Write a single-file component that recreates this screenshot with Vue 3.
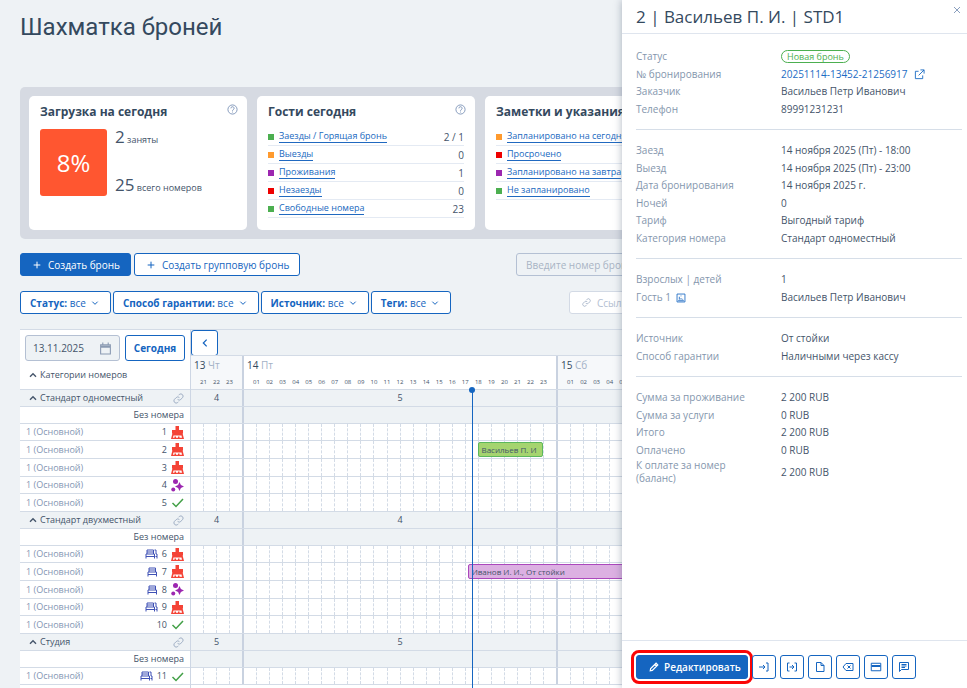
<script setup>
import { ref } from 'vue'

const date = ref('13.11.2025')
const search = ref('')

const guests = [
  { color: 'green', label: 'Заезды / Горящая бронь', value: '2 / 1' },
  { color: 'orange', label: 'Выезды', value: '0' },
  { color: 'purple', label: 'Проживания', value: '1' },
  { color: 'red', label: 'Незаезды', value: '0' },
  { color: 'green', label: 'Свободные номера', value: '23' },
]
const notes = [
  { color: 'orange', label: 'Запланировано на сегодня' },
  { color: 'red', label: 'Просрочено' },
  { color: 'purple', label: 'Запланировано на завтра' },
  { color: 'green', label: 'Не запланировано' },
]
const filters = ['Статус:', 'Способ гарантии:', 'Источник:', 'Теги:']

const HOUR = 314 / 24
const FIRST_DAY = 51
const days = [
  { num: '13', name: 'Чт', from: 20, width: FIRST_DAY, muted: true },
  { num: '14', name: 'Пт', from: 0, width: 314, muted: false },
  { num: '15', name: 'Сб', from: 0, width: 314, muted: true },
]
const hoursOf = (d) => Array.from({ length: 23 - d.from }, (_, i) => String(d.from + i + 1).padStart(2, '0'))
/* offset of an hour of 14 November from the left edge of the timeline */
const at = (h) => FIRST_DAY + h * HOUR

const categories = [
  {
    name: 'Стандарт одноместный', free: ['4', '5', ''],
    rooms: [
      { n: 1, state: 'dirty' },
      { n: 2, state: 'dirty', stay: { from: 18, to: 23, text: 'Васильев П. И', kind: 'new' } },
      { n: 3, state: 'dirty' }, { n: 4, state: 'clean' }, { n: 5, state: 'ok' },
    ],
  },
  {
    name: 'Стандарт двухместный', free: ['4', '4', ''],
    rooms: [
      { n: 6, state: 'dirty', bed: 'extra' },
      { n: 7, state: 'dirty', bed: 'one', stay: { from: 17.25, to: 44, text: 'Иванов И. И., От стойки', kind: 'live' } },
      { n: 8, state: 'clean', bed: 'one' }, { n: 9, state: 'dirty', bed: 'extra' }, { n: 10, state: 'ok' },
    ],
  },
  { name: 'Студия', free: ['5', '5', ''], rooms: [{ n: 11, state: 'ok', bed: 'extra' }] },
]

const details = [
  [['Заезд', '14 ноября 2025 (Пт) - 18:00'], ['Выезд', '14 ноября 2025 (Пт) - 23:00'], ['Дата бронирования', '14 ноября 2025 г.'], ['Ночей', '0'], ['Тариф', 'Выгодный тариф'], ['Категория номера', 'Стандарт одноместный']],
  [['Взрослых | детей', '1'], ['Гость 1', 'Васильев Петр Иванович', 'profile']],
  [['Источник', 'От стойки'], ['Способ гарантии', 'Наличными через кассу']],
  [['Сумма за проживание', '2 200 RUB'], ['Сумма за услуги', '0 RUB'], ['Итого', '2 200 RUB'], ['Оплачено', '0 RUB'], ['К оплате за номер (баланс)', '2 200 RUB', 'tall']],
]

const tools = [
  { label: 'Заселить', d: 'M2 12h12M10 8l4 4-4 4M16 4h4v16h-4' },
  { label: 'Выселить', d: 'M7 4H3v16h4M17 4h4v16h-4M7 12h9M12 8l4 4-4 4' },
  { label: 'Документы', d: 'M5 3h9l6 6v12H5zM14 3v6h6' },
  { label: 'Отменить', d: 'M8 5h14v14H8l-6-7zM11 9l6 6M17 9l-6 6' },
  { label: 'Оплата', d: 'M2.500 4.500h19v15h-19zM3 9h18M3 11h18' },
  { label: 'Заметки', d: 'M3 3h18v14H7l-4 4zM7 7h10M7 10h10M7 13h7' },
]
</script>

<template>
  <div class="page">
    <main class="main">
      <h1>Шахматка броней</h1>

      <section class="stats">
        <article class="card">
          <header>
            <h2>Загрузка на сегодня</h2>
            <svg class="help" viewBox="0 0 24 24"><circle cx="12" cy="12" r="10" /><path d="M8.500 9.500a3.500 3.500 0 1 1 5.200 3c-1.200.7-1.700 1.300-1.700 2.500M12 16.500v2" /></svg>
          </header>
          <div class="load">
            <div class="percent">8%</div>
            <div class="load-text">
              <p><b>2</b> заняты</p>
              <p><b>25</b> всего номеров</p>
            </div>
          </div>
        </article>
        <article class="card">
          <header>
            <h2>Гости сегодня</h2>
            <svg class="help" viewBox="0 0 24 24"><circle cx="12" cy="12" r="10" /><path d="M8.500 9.500a3.500 3.500 0 1 1 5.200 3c-1.200.7-1.700 1.300-1.700 2.500M12 16.500v2" /></svg>
          </header>
          <ul>
            <li v-for="g in guests" :key="g.label">
              <i :class="g.color"></i><a href="#">{{ g.label }}</a><span>{{ g.value }}</span>
            </li>
          </ul>
        </article>
        <article class="card">
          <header><h2>Заметки и указания</h2></header>
          <ul>
            <li v-for="n in notes" :key="n.label"><i :class="n.color"></i><a href="#">{{ n.label }}</a></li>
          </ul>
        </article>
      </section>

      <div class="actions">
        <button class="btn primary"><svg viewBox="0 0 24 24"><path d="M12 2v20M2 12h20" /></svg>Создать бронь</button>
        <button class="btn"><svg viewBox="0 0 24 24"><path d="M12 2v20M2 12h20" /></svg>Создать групповую бронь</button>
        <input v-model="search" class="search" type="text" aria-label="Номер брони" placeholder="Введите номер брони">
      </div>

      <div class="filters">
        <button v-for="f in filters" :key="f" class="btn filter" aria-haspopup="listbox">
          <b>{{ f }}</b> все<svg viewBox="0 0 24 24"><path d="M4 8l8 8 8-8" /></svg>
        </button>
        <div class="links">
          <button class="link-btn">
            <svg class="clip" viewBox="0 0 24 24"><path d="M10 14a5 5 0 0 0 7 0l4-4a5 5 0 0 0-7-7l-2 2M14 10a5 5 0 0 0-7 0l-4 4a5 5 0 0 0 7 7l2-2" /></svg>Ссылки
          </button>
        </div>
      </div>

      <section class="board">
        <div class="side">
          <div class="side-head">
            <div class="dates">
              <label class="date">
                <input v-model="date" type="text" aria-label="Дата">
                <svg viewBox="0 0 24 24"><path d="M3 5h18v17H3zM3 9.500h18M7 1v4M17 1v4M3 7.500h18" /></svg>
              </label>
              <button class="today">Сегодня</button>
            </div>
            <div class="all"><svg class="caret" viewBox="0 0 24 24"><path d="M3 17l9-9 9 9" /></svg>Категории номеров</div>
          </div>
          <div v-for="c in categories" :key="c.name" class="group">
            <div class="row cat">
              <svg class="caret" viewBox="0 0 24 24"><path d="M3 17l9-9 9 9" /></svg>{{ c.name }}
              <svg class="clip" viewBox="0 0 24 24"><path d="M10 14a5 5 0 0 0 7 0l4-4a5 5 0 0 0-7-7l-2 2M14 10a5 5 0 0 0-7 0l-4 4a5 5 0 0 0 7 7l2-2" /></svg>
            </div>
            <div class="row none">Без номера</div>
            <div v-for="r in c.rooms" :key="r.n" class="row room">
              <span class="place">1 (Основной)</span>
              <svg v-if="r.bed" class="bed" :class="r.bed" :viewBox="r.bed === 'extra' ? '0 0 26 20' : '0 0 22 20'">
                <path d="M4 10V2h13v8M2 19v-9h17v9M2 15h17M4 6h13" />
                <path v-if="r.bed === 'extra'" d="M19 2h3v8h2v9M21 15h3" />
              </svg>
              <span class="num">{{ r.n }}</span>
              <svg v-if="r.state === 'dirty'" class="state dirty" viewBox="0 0 26 26">
                <path d="M9 0h7v8h8v7H2V8h7z" />
                <path d="M3 14h20l3 12H0zM5 19l-1.200 4.500H7V21h3v2.500h4V21h3v2.500h5L21 19z" fill-rule="evenodd" />
              </svg>
              <svg v-else-if="r.state === 'clean'" class="state clean" viewBox="0 0 26 26">
                <circle cx="9" cy="5" r="5" /><circle cx="4.500" cy="21" r="4" />
                <path d="M17 6l2.800 6.200L26 15l-6.200 2.800L17 24l-2.800-6.200L8 15l6.200-2.800z" />
              </svg>
              <svg v-else class="state ok" viewBox="0 0 26 26"><path d="M3 14l7 7L24 6" /></svg>
            </div>
          </div>
        </div>

        <div class="timeline">
          <div class="nav">
            <button aria-label="Назад"><svg viewBox="0 0 24 24"><path d="M16 4l-8 8 8 8" /></svg></button>
          </div>
          <div class="strip head">
            <div v-for="d in days" :key="d.num" class="day" :class="{ muted: d.muted }" :style="{ width: d.width + 'px' }">
              <div class="day-name"><b>{{ d.num }}</b> {{ d.name }}</div>
              <div class="hours"><span v-for="h in hoursOf(d)" :key="h">{{ h }}</span></div>
            </div>
          </div>
          <div class="body">
            <div v-for="c in categories" :key="c.name" class="group">
              <div class="row strip shade">
                <div v-for="(d, i) in days" :key="d.num" class="day count" :style="{ width: d.width + 'px' }">{{ c.free[i] }}</div>
              </div>
              <div class="row strip shade">
                <div v-for="d in days" :key="d.num" class="day" :style="{ width: d.width + 'px' }"></div>
              </div>
              <div v-for="r in c.rooms" :key="r.n" class="row strip">
                <div v-for="d in days" :key="d.num" class="day cells" :style="{ width: d.width + 'px' }">
                  <span v-for="h in 24 - d.from" :key="h"></span>
                </div>
                <div v-if="r.stay" class="stay" :class="r.stay.kind" :style="{ left: at(r.stay.from) + 'px', width: (r.stay.to - r.stay.from) * HOUR + 'px' }">{{ r.stay.text }}</div>
              </div>
            </div>
            <div class="now" :style="{ left: at(17.6) + 'px' }"></div>
          </div>
        </div>
      </section>
    </main>

    <aside class="panel">
      <header class="panel-head">
        <h2>2 | Васильев П. И. | STD1</h2>
        <button class="close" aria-label="Закрыть"><svg viewBox="0 0 24 24"><path d="M3 3l18 18M21 3L3 21" /></svg></button>
      </header>
      <div class="panel-body">
        <dl>
          <div><dt>Статус</dt><dd><span class="tag">Новая бронь</span></dd></div>
          <div>
            <dt>№ бронирования</dt>
            <dd><a href="#">20251114-13452-21256917<svg viewBox="0 0 24 24"><path d="M10 5H3v16h16v-7M14 2h8v8M22 2L10 14" /></svg></a></dd>
          </div>
          <div><dt>Заказчик</dt><dd>Васильев Петр Иванович</dd></div>
          <div><dt>Телефон</dt><dd>89991231231</dd></div>
        </dl>
        <dl v-for="(g, i) in details" :key="i">
          <div v-for="[k, v, kind] in g" :key="k" :class="kind">
            <dt>{{ k }}<svg v-if="kind === 'profile'" viewBox="0 0 24 24"><path d="M2.500 2.500h19v19h-19zM5 18.500h14M8 9v7M12 12v4M16 14v2M12 6v2" /></svg></dt>
            <dd>{{ v }}</dd>
          </div>
        </dl>
      </div>
      <footer>
        <button class="btn primary edit"><svg viewBox="0 0 24 24"><path d="M3 21l1-5L17 3l4 4L8 20zM14 6l4 4" /></svg>Редактировать</button>
        <button v-for="t in tools" :key="t.label" class="tool" :aria-label="t.label"><svg viewBox="0 0 24 24"><path :d="t.d" /></svg></button>
      </footer>
    </aside>
  </div>
</template>

<style>
body {
  margin: 0;
  background: #eef2f5;
}
</style>

<style scoped>
* { box-sizing: border-box; }
.page {
  position: relative;
  height: 100vh;
  overflow: hidden;
  font: 10px/14px "Open Sans", "Noto Sans", sans-serif;
  color: #44546a;
}
h1, h2, p, ul, dl, dd { margin: 0; padding: 0; }
button, input { font: inherit; color: inherit; }
button { cursor: pointer; padding: 0; white-space: nowrap; }
svg { fill: none; stroke: currentColor; stroke-width: 2; flex: none; }
.main { display: flex; flex-direction: column; height: 100%; padding: 9px 27px 0 20px; }
h1 { font: 400 24px/36px Roboto, "Noto Sans", sans-serif; color: #34495e; }

.stats {
  display: grid;
  grid-template-columns: repeat(4, 1fr);
  gap: 10px;
  margin-top: 42px;
  padding: 9px;
  background: #d6dae2;
  border-radius: 5px;
}
.card {
  height: 134px;
  padding: 8px 11px;
  background: #fff;
  border-radius: 5px;
}
.card header { display: flex; justify-content: space-between; }
.card h2 { font-size: 12px; line-height: 16px; font-weight: 700; color: #34495e; white-space: nowrap; }
.help { width: 11px; height: 11px; color: #7d94b8; margin-right: -2px; }
.load { display: flex; gap: 8px; margin-top: 9px; }
.percent {
  width: 67px;
  height: 67px;
  border-radius: 3px;
  background: #ff5630;
  color: #fff;
  font-size: 24px;
  line-height: 67px;
  text-align: center;
}
.load-text { display: flex; flex-direction: column; justify-content: space-between; }
.load-text p { line-height: 16px; font-size: 9px; }
.load-text b { font-size: 17px; font-weight: 400; }
ul { list-style: none; margin-top: 8px; }
li {
  display: flex;
  align-items: center;
  height: 18px;
  border-bottom: 1px solid #e4eaf3;
}
li i { width: 6px; height: 6px; margin-right: 5px; }
li a {
  color: #2069c0;
  font-size: 9px;
  line-height: 12px;
  text-decoration: none;
  border-bottom: 1px solid #2069c0;
  white-space: nowrap;
}
li span { margin-left: auto; }
.green { background: #4caf50; }
.orange { background: #ff9a2e; }
.purple { background: #9c27b0; }
.red { background: #ee0000; }

.btn {
  display: flex;
  align-items: center;
  height: 23px;
  padding: 0 10px;
  border: 1px solid #1565c0;
  border-radius: 3px;
  background: #fff;
  color: #1565c0;
}
.btn svg { width: 8px; height: 8px; margin: 0 7px 0 2px; stroke-width: 3; }
.btn.primary { background: #1565c0; color: #fff; }
.actions { display: flex; gap: 3px; margin-top: 14px; }
.search {
  width: 424px;
  height: 23px;
  margin-left: auto;
  padding: 0 9px;
  border: 1px solid #b4c0d3;
  border-radius: 3px;
  background: transparent;
}
.search::placeholder { color: #a9b4c4; opacity: 1; }
.filters { display: flex; gap: 2px; margin-top: 15px; }
.filter { padding: 0 9px; white-space: pre; }
.filter svg { width: 8px; height: 8px; margin: 0 2px 0 5px; }
.links { width: 371px; margin-left: auto; }
.link-btn {
  display: flex;
  align-items: center;
  height: 23px;
  width: 100%;
  padding: 0 12px;
  border: 1px solid #d3dae5;
  border-radius: 3px;
  background: #fff;
  color: #b3c0d2;
}
.link-btn .clip { width: 9px; height: 9px; margin-right: 6px; }

.board { display: flex; flex: 1; margin-top: 15px; border-top: 1px solid #d3dbe6; }
.side { flex: none; width: 171px; background: #fff; border-right: 1px solid #cdd6e4; }
.side-head { height: 60px; padding: 5px 5px 0 5px; border-bottom: 1px solid #d3dbe6; }
.dates { display: flex; justify-content: space-between; }
.date {
  display: flex;
  align-items: center;
  width: 95px;
  height: 26px;
  padding: 0 7px;
  border: 1px solid #b4c0d3;
  border-radius: 3px;
  background: #eef2f5;
}
.date input { flex: 1; min-width: 0; padding: 0; border: 0; background: none; outline: 0; }
.date svg { width: 13px; height: 13px; color: #8a9ab2; }
.today {
  width: 60px;
  border: 1px solid #1565c0;
  border-radius: 3px;
  background: #fff;
  color: #1565c0;
  font-weight: 700;
}
.all { display: flex; align-items: center; height: 28px; padding-left: 4px; font-size: 9px; }
.caret { width: 8px; height: 8px; margin-right: 3px; stroke-width: 4; }
.clip { width: 11px; height: 11px; color: #98a8c0; }

.row { display: flex; align-items: center; height: 17px; border-bottom: 1px solid #d3dbe6; }
.row:nth-child(4), .row:nth-child(5), .row:nth-child(7) { height: 18px; }
.side .row { padding: 0 6px; font-size: 9px; }
.side .cat { padding-left: 9px; background: #eef2f5; }
.cat .clip { margin-left: auto; }
.side .none { justify-content: flex-end; }
.place { margin-right: auto; color: #8496b3; }
.num { margin: 0 4px; }
.state { width: 13px; height: 13px; }
.dirty { fill: #f44336; stroke: none; }
.clean { fill: #9c27b0; stroke: none; }
.ok { color: #43a047; stroke-width: 3; }
.bed { width: 11px; height: 10px; color: #3f51b5; }
.bed.extra { width: 13px; }

.timeline { display: flex; flex-direction: column; flex: 1; min-width: 0; }
.nav { height: 25px; }
.nav button {
  display: block;
  width: 27px;
  height: 26px;
  border: 1px solid #1565c0;
  border-radius: 3px;
  background: #fff;
  color: #1565c0;
}
.nav svg { display: block; width: 10px; height: 10px; margin: 0 auto; stroke-width: 3; }
.strip { position: relative; display: flex; width: 679px; }
.head { height: 35px; border-top: 1px solid #d3dbe6; border-bottom: 1px solid #d3dbe6; background: #fff; }
.day { flex: none; height: 100%; }
.day + .day { border-left: 2px solid #c9d2e0; }
.muted { background: #f6f8fa; }
.day-name { height: 18px; padding: 2px 3px; color: #a3b1c6; }
.day-name b { font-weight: 400; color: #34495e; }
.hours { display: flex; justify-content: space-evenly; height: 15px; padding: 0 6px; font-size: 6px; line-height: 16px; }
.hours span { flex: 1; text-align: center; }
.body { position: relative; flex: 1; background: #fff; }
.timeline .row { background: #fff; }
.timeline .shade { background: #eef2f5; }
.count { text-align: center; font-size: 9px; line-height: 16px; }
.cells { display: flex; }
.cells span { flex: 1; }
.cells span + span { border-left: 1px dashed #d3dbe6; }
.stay {
  position: absolute;
  top: 1px;
  height: 15px;
  padding: 0 3px;
  overflow: hidden;
  border: 1px solid;
  border-radius: 2px;
  font-size: 8px;
  line-height: 14px;
  white-space: nowrap;
}
.new { background: #a5d46f; border-color: #5cb85c; }
.live { background: #dcb0e2; border-color: #ab47bc; }
.now { position: absolute; top: 0; bottom: 0; width: 1px; background: #1565c0; }
.now::before {
  content: "";
  position: absolute;
  top: -3px;
  left: -3px;
  width: 6px;
  height: 6px;
  border-radius: 50%;
  background: #1565c0;
}

.panel {
  position: absolute;
  top: 0;
  right: 0;
  bottom: 0;
  display: flex;
  flex-direction: column;
  width: 345px;
  background: #fff;
  box-shadow: 0 0 8px rgba(60, 75, 100, 0.4);
  line-height: 13px;
}
.panel-head {
  display: flex;
  justify-content: space-between;
  align-items: flex-start;
  height: 34px;
  padding: 5px 6px 0 14px;
  border-bottom: 1px solid #dfe5ee;
}
.panel-head h2 { font-size: 17px; line-height: 24px; font-weight: 400; color: #34495e; }
.close { height: 10px; border: 0; background: none; color: #8a9fbe; }
.close svg { display: block; width: 8px; height: 10px; stroke-width: 3; }
.panel-body { flex: 1; padding: 14px 5px 0 14px; }
dl + dl { margin-top: 11px; padding-top: 12px; border-top: 1px solid #d6dee8; }
dl div { display: grid; grid-template-columns: 145px 1fr; align-items: center; height: 17px; }
dl div:nth-child(even) { height: 18px; }
dl .tall { height: 25px; }
dt { color: #8496ad; }
.tall dt { padding-right: 40px; }
dt svg { width: 10px; height: 10px; margin-left: 5px; color: #1565c0; vertical-align: -2px; }
dd { color: #44546a; }
dd a { color: #1c6cc4; text-decoration: none; }
dd svg { width: 11px; height: 11px; margin-left: 6px; vertical-align: -2px; }
.tag {
  display: inline-block;
  height: 13px;
  padding: 0 5px;
  border: 1px solid #4caf50;
  border-radius: 7px;
  color: #4caf50;
  font-size: 9px;
  line-height: 11px;
}
footer { display: flex; gap: 4px; height: 48px; padding: 14px 14px 0; border-top: 1px solid #dfe5ee; }
.edit {
  width: 112px;
  height: 24px;
  outline: 3px solid #fb0505;
  outline-offset: 2px;
  font-weight: 600;
}
.edit svg { width: 10px; height: 10px; margin-right: 5px; }
.tool {
  width: 24px;
  height: 24px;
  border: 1px solid #1565c0;
  border-radius: 3px;
  background: #fff;
  color: #1565c0;
}
.tool svg { display: block; width: 12px; height: 12px; margin: 0 auto; }
</style>
